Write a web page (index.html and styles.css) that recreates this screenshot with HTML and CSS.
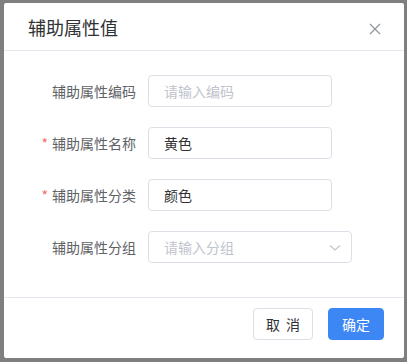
FILE: index.html
```html
<!DOCTYPE html>
<html lang="zh">
<head>
<meta charset="utf-8">
<link rel="stylesheet" href="styles.css">
</head>
<body>
<div class="dialog">
  <div class="header">
    <span class="title">辅助属性值</span>
    <span class="close">
      <svg width="12" height="12" viewBox="0 0 12 12"><path d="M1 1 L11 11 M11 1 L1 11" stroke="#909399" stroke-width="1.2" fill="none"/></svg>
    </span>
  </div>
  <div class="body">
    <div class="row">
      <label class="label">辅助属性编码</label>
      <div class="input placeholder">请输入编码</div>
    </div>
    <div class="row">
      <label class="label"><span class="req">*</span>辅助属性名称</label>
      <div class="input">黄色</div>
    </div>
    <div class="row">
      <label class="label"><span class="req">*</span>辅助属性分类</label>
      <div class="input">颜色</div>
    </div>
    <div class="row">
      <label class="label">辅助属性分组</label>
      <div class="input select placeholder">请输入分组
        <svg class="chev" width="12" height="8" viewBox="0 0 12 8"><path d="M1 1.5 L6 6 L11 1.5" stroke="#c0c4cc" stroke-width="1.2" fill="none"/></svg>
      </div>
    </div>
  </div>
  <div class="footer">
    <button class="btn cancel">取 消</button>
    <button class="btn primary">确定</button>
  </div>
</div>
</body>
</html>
```
FILE: styles.css
```css
html, body {
  margin: 0;
  padding: 0;
  background: #7f7f7f;
  width: 407px;
  height: 362px;
  overflow: hidden;
  font-family: "Noto Sans CJK SC", "Noto Sans", sans-serif;
}
.dialog {
  margin: 3px 0 0 4px;
  width: 400px;
  height: 355px;
  background: #fff;
  border-radius: 2px;
  display: flex;
  flex-direction: column;
  box-sizing: border-box;
}
.header {
  height: 48px;
  box-sizing: border-box;
  border-bottom: 1px solid #e4e7ed;
  display: flex;
  align-items: center;
  justify-content: space-between;
  padding: 0 23px 0 24px;
}
.title {
  font-size: 18px;
  color: #303133;
  line-height: 24px;
}
.close {
  display: flex;
  margin-top: 4px;
}
.body {
  padding: 24px 0 0 0;
  flex: 1;
}
.row {
  display: flex;
  align-items: center;
  height: 32px;
  margin-bottom: 20px;
}
.label {
  width: 144px;
  box-sizing: border-box;
  padding-right: 12px;
  text-align: right;
  font-size: 14px;
  color: #606266;
}
.req {
  color: #f56c6c;
  margin-right: 4px;
}
.input {
  width: 184px;
  height: 32px;
  box-sizing: border-box;
  border: 1px solid #dcdfe6;
  border-radius: 4px;
  padding-left: 15px;
  font-size: 14px;
  line-height: 30px;
  color: #303133;
  position: relative;
}
.placeholder {
  color: #c0c4cc;
}
.select {
  width: 204px;
}
.chev {
  position: absolute;
  right: 10px;
  top: 12px;
}
.footer {
  border-top: 1px solid #e4e7ed;
  height: 61px;
  box-sizing: border-box;
  display: flex;
  justify-content: flex-end;
  align-items: flex-start;
  padding: 10px 20px 0 0;
  gap: 15px;
}
.btn {
  height: 32px;
  border: 1px solid #dcdfe6;
  background: #fff;
  border-radius: 4px;
  font-family: "Noto Sans CJK SC", "Noto Sans", sans-serif;
  font-size: 14px;
  color: #303133;
  padding: 0;
  width: 60px;
  cursor: pointer;
}
.btn.cancel {
  word-spacing: 3px;
}
.btn.primary {
  width: 56px;
  background: #3c87f4;
  border-color: #3c87f4;
  color: #fff;
}
```
